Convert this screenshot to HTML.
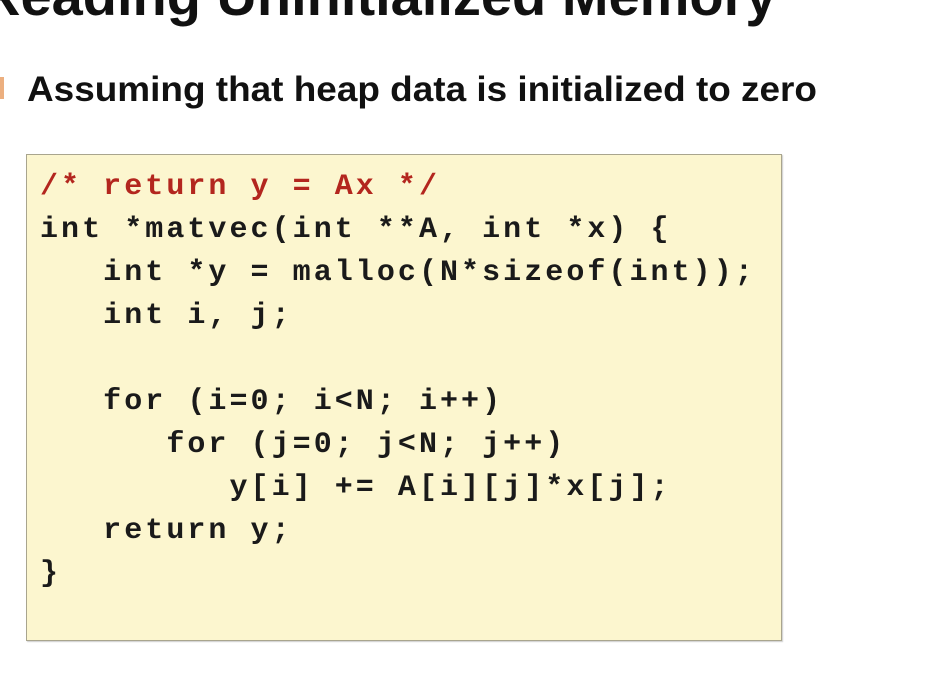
<!DOCTYPE html>
<html><head><meta charset="utf-8"><style>
html,body{margin:0;padding:0;background:#fff;width:941px;height:690px;overflow:hidden;position:relative}
.title{position:absolute;left:-20px;top:-37px;font-family:"Liberation Sans",sans-serif;font-weight:bold;font-size:56px;color:#111;white-space:nowrap}
.bullet{position:absolute;left:-6px;top:77px;width:10px;height:22px;background:#e07a2a;opacity:.6}
.sub{position:absolute;left:27px;top:70px;font-family:"Liberation Sans",sans-serif;font-weight:bold;font-size:35px;color:#111;white-space:nowrap;transform-origin:left top}
.box{position:absolute;left:26px;top:154px;width:754px;height:485px;background:#fcf6cf;border:1px solid #a9a58e;box-shadow:1px 1px 1px #ccc}
pre{position:absolute;left:40px;top:166px;margin:0;font-family:"Liberation Mono",monospace;font-weight:bold;font-size:30px;line-height:43px;letter-spacing:3.05px;color:#1a1a1a}
.c{color:#b3261e}
</style></head><body>
<div class="title">Reading Uninitialized Memory</div>
<div class="bullet"></div>
<div class="sub" id="s">Assuming that heap data is initialized to zero</div>
<div class="box"></div>
<pre><span class="c">/* return y = Ax */</span>
int *matvec(int **A, int *x) {
   int *y = malloc(N*sizeof(int));
   int i, j;

   for (i=0; i&lt;N; i++)
      for (j=0; j&lt;N; j++)
         y[i] += A[i][j]*x[j];
   return y;
}</pre>
<script>
var s=document.getElementById('s');var w=s.getBoundingClientRect().width;s.style.transform='scaleX('+(790/w)+')';
</script>
</body></html>
